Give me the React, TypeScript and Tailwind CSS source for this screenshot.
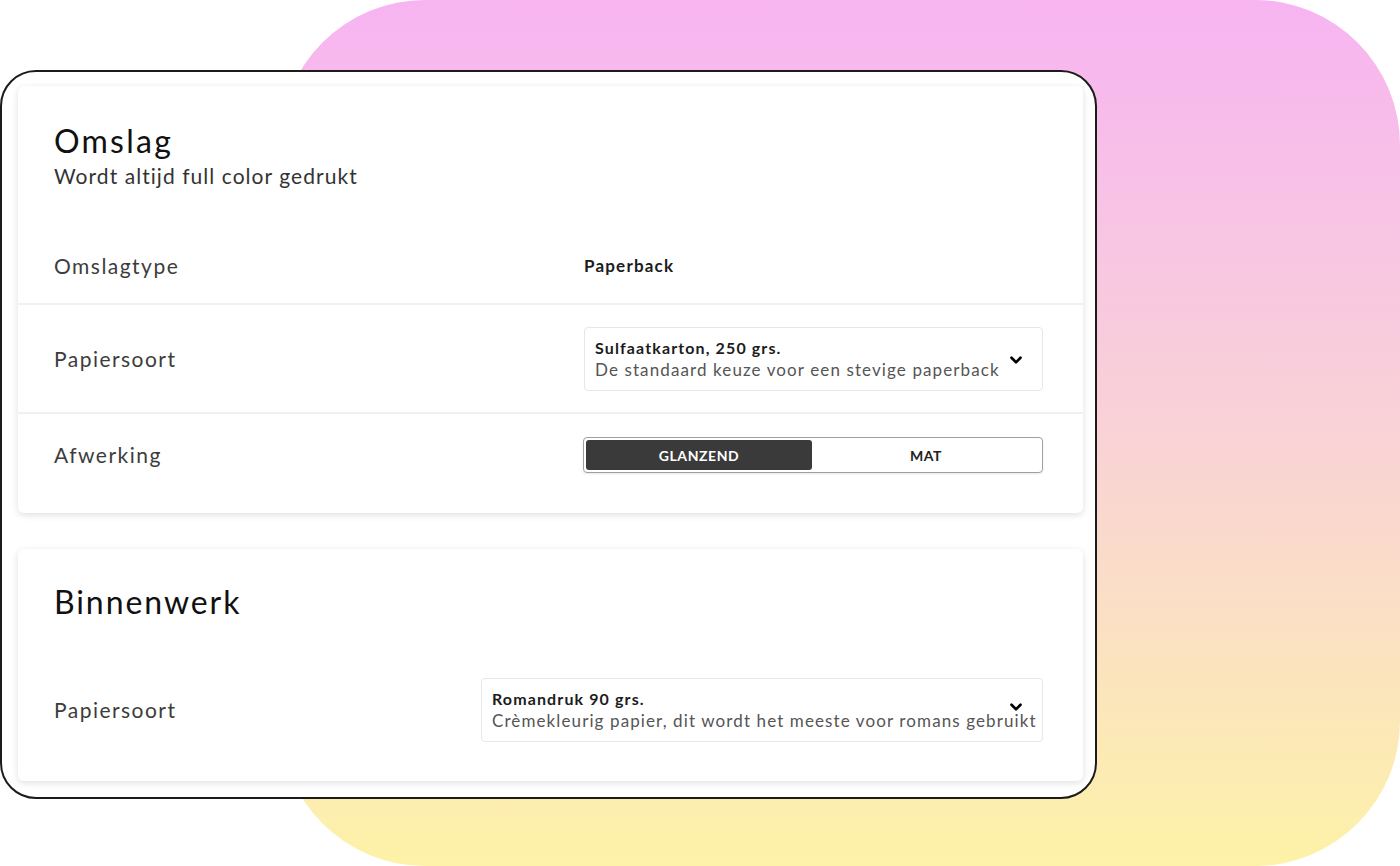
import { ChevronDown } from "lucide-react";

interface SelectProps {
  title: string;
  description: string;
  width: string;
  chevronTop: string;
}

function PaperSelect({ title, description, width, chevronTop }: SelectProps) {
  return (
    <div
      className={`relative ${width} h-[64px] rounded-[4px] border border-[#e6e6e6] bg-white pl-[10px] pr-[10px] flex flex-col justify-center`}
    >
      <p className="text-[16px] leading-[22px] font-bold tracking-[0.07em] text-[#1c1c1c] whitespace-nowrap">{title}</p>
      <p className="text-[17px] leading-[22px] tracking-[0.065em] text-[#555] whitespace-nowrap">{description}</p>
      <ChevronDown
        className={`absolute right-[17px] ${chevronTop} w-[18px] h-[18px] text-black`}
        strokeWidth={3.5}
      />
    </div>
  );
}

function Label({ children }: { children: React.ReactNode }) {
  return <span className="text-[21px] tracking-[0.07em] text-[#3c3c3c]">{children}</span>;
}

export default function App() {
  return (
    <div className="relative w-[1400px] h-[866px] overflow-hidden bg-white font-['Lato',sans-serif]">
      {/* gradient blob behind the window */}
      <div className="absolute left-[280px] top-0 right-0 bottom-0 rounded-[145px] bg-linear-to-b from-[#f7b4f1] via-[#f9d2d6] to-[#fdf2a7]" />

      <div className="relative z-10 mt-[70px] w-[1097px] h-[729px] rounded-[36px] border-2 border-[#1b1b1b] bg-white pl-[16px] pr-[12px] pt-[14px] flex flex-col gap-[36px]">
        {/* Omslag */}
        <section className="h-[427px] rounded-[6px] bg-white shadow-[0_2px_7px_rgba(0,0,0,0.13)] flex flex-col">
          <div className="pl-[36px] pt-[37px]">
            <h1 className="text-[32px] leading-[36px] tracking-[0.07em] text-[#111]">Omslag</h1>
            <p className="mt-[5px] text-[21px] leading-[24px] tracking-[0.05em] text-[#333]">Wordt altijd full color gedrukt</p>
          </div>

          <div className="mt-[41px] h-[74px] flex items-center pl-[36px] pr-[40px]">
            <div className="flex-1">
              <Label>Omslagtype</Label>
            </div>
            <div className="w-[459px] text-[17px] font-bold tracking-[0.07em] text-[#1c1c1c]">Paperback</div>
          </div>

          <div className="h-[109px] border-t-2 border-[#f0f0f0] flex items-center pl-[36px] pr-[40px]">
            <div className="flex-1">
              <Label>Papiersoort</Label>
            </div>
            <PaperSelect
              width="w-[459px]"
              chevronTop="top-[23px]"
              title="Sulfaatkarton, 250 grs."
              description="De standaard keuze voor een stevige paperback"
            />
          </div>

          <div className="h-[84px] border-t-2 border-[#f0f0f0] flex items-center pl-[36px] pr-[40px]">
            <div className="flex-1">
              <Label>Afwerking</Label>
            </div>
            <div className="w-[460px] h-[36px] rounded-[4px] border-[1.5px] border-[#a0a0a0] p-[2px] flex shadow-[0_1px_2px_rgba(0,0,0,0.1)]">
              <button className="w-[226px] rounded-[3px] bg-[#3a3a3a] text-white text-[14px] font-bold tracking-[0.04em]">
                GLANZEND
              </button>
              <button className="flex-1 text-[#222] text-[14px] font-bold tracking-[0.04em]">MAT</button>
            </div>
          </div>
        </section>

        {/* Binnenwerk */}
        <section className="h-[232px] rounded-[6px] bg-white shadow-[0_2px_7px_rgba(0,0,0,0.13)] flex flex-col">
          <div className="pl-[36px] pt-[35px]">
            <h2 className="text-[32px] leading-[36px] tracking-[0.06em] text-[#111]">Binnenwerk</h2>
          </div>
          <div className="mt-[58px] flex items-center pl-[36px] pr-[40px]">
            <div className="flex-1">
              <Label>Papiersoort</Label>
            </div>
            <PaperSelect
              width="w-[562px]"
              chevronTop="top-[19px]"
              title="Romandruk 90 grs."
              description="Crèmekleurig papier, dit wordt het meeste voor romans gebruikt"
            />
          </div>
        </section>
      </div>
    </div>
  );
}
